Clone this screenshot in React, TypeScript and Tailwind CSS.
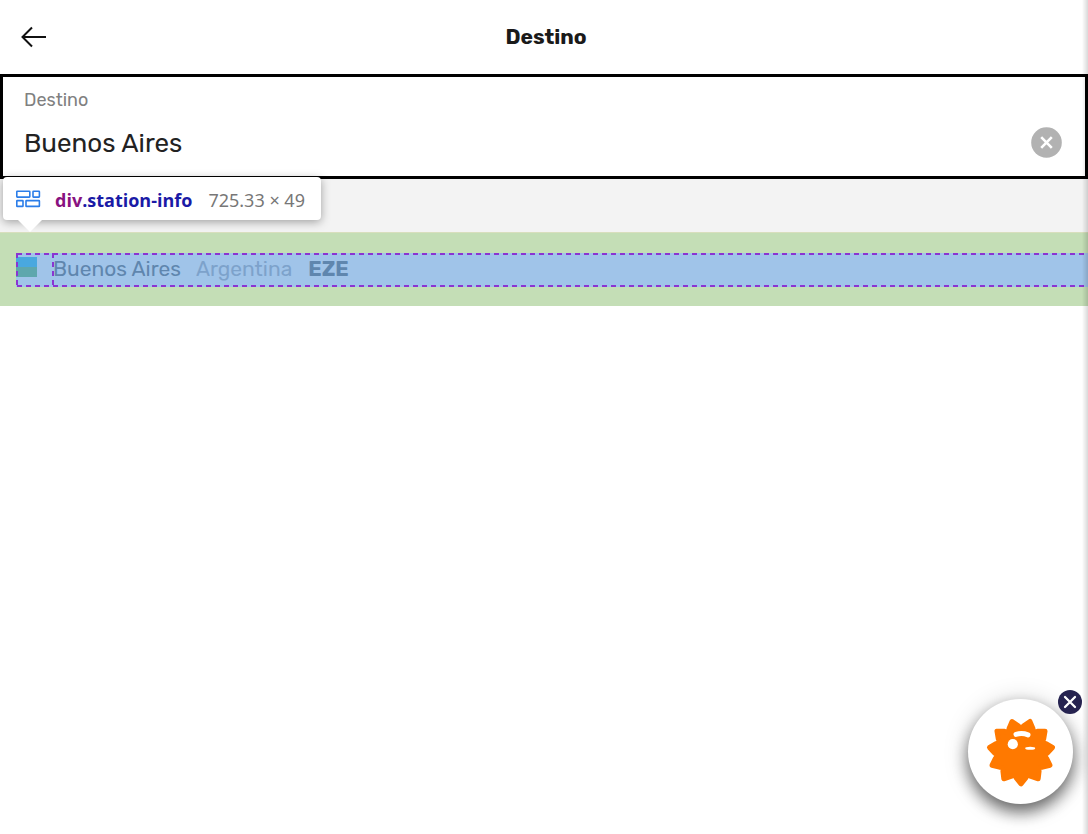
import React from "react";

const TIPS = 11;
const point = (radius: number, step: number) => {
  const angle = Math.PI / 2 + (step * 2 * Math.PI) / TIPS;
  return `${(36 + radius * Math.cos(angle)).toFixed(2)} ${(36 + radius * Math.sin(angle)).toFixed(2)}`;
};
const burst =
  `M${point(31.8, 0)}` +
  Array.from(
    { length: TIPS },
    (_, i) => `L${point(26.4, i + 0.32)}Q${point(22.8, i + 0.5)} ${point(26.4, i + 0.68)}L${point(31.8, i + 1)}`,
  ).join("") +
  "Z";

function Header() {
  return (
    <header className="relative flex h-[74px] items-center justify-center bg-white pl-1">
      <button type="button" aria-label="Volver" className="absolute left-5 flex h-8 w-8 items-center">
        <svg width="28" height="24" viewBox="0 0 28 24" fill="none" stroke="#111" strokeWidth="2">
          <path d="M26 12H2.5M12 2.5L2.5 12l9.5 9.5" />
        </svg>
      </button>
      <h1 className="text-[21px] leading-7 font-bold text-[#1a1a1a]">Destino</h1>
    </header>
  );
}

function DestinationField() {
  return (
    <div className="flex h-[105px] items-end border-[3px] border-black bg-white pr-[23px] pb-[13px] pl-[21px]">
      <div className="flex flex-1 flex-col gap-[11px]">
        <label htmlFor="destination" className="text-[18px] leading-6 text-[#808080]">
          Destino
        </label>
        <input
          id="destination"
          defaultValue="Buenos Aires"
          className="h-10 w-full bg-transparent text-[26px] text-[#222] outline-none"
        />
      </div>
      <button type="button" aria-label="Borrar" className="mb-[5px] h-[31px] w-[31px] shrink-0">
        <svg width="31" height="31" viewBox="0 0 31 31">
          <circle cx="15.5" cy="15.5" r="15.3" fill="#b2b2b2" />
          <path d="M10.2 10.2l10.6 10.6M20.8 10.2L10.2 20.8" stroke="#fff" strokeWidth="2.6" />
        </svg>
      </button>
    </div>
  );
}

function InspectorTooltip() {
  return (
    <div className="absolute top-[177px] left-[3px] z-10 flex h-[43px] w-[318px] items-center rounded-[4px] bg-white pl-3 font-['Noto_Sans','Open_Sans',sans-serif] text-[18px] shadow-[0_2px_10px_rgba(0,0,0,0.35)]">
      <svg width="26" height="20" viewBox="0 0 26 20" fill="none" stroke="#2b7de9" strokeWidth="1.6" className="shrink-0">
        <rect x="1.8" y="2.3" width="13" height="5.8" rx=".5" />
        <rect x="18" y="2.3" width="6.4" height="5.8" rx=".5" />
        <rect x="1.8" y="11.6" width="6.2" height="5.8" rx=".5" />
        <rect x="11" y="11.6" width="13.4" height="5.8" rx=".5" />
      </svg>
      <div className="flex items-baseline pt-[3px] pl-[14px] whitespace-nowrap">
        <span className="font-['Open_Sans','Noto_Sans',sans-serif] text-[18px] font-bold text-[#1a1aa6]">
          <span className="text-[#881280]">div</span>.station-info
        </span>
        <span className="ml-4 text-[#777]">725.33 × 49</span>
      </div>
      <svg width="24" height="12" viewBox="0 0 24 12" className="absolute top-full left-[15px]">
        <path d="M0 0h24L12 12z" fill="#fff" />
      </svg>
    </div>
  );
}

const horizontalDash = "absolute right-0 left-px h-[2px] bg-[repeating-linear-gradient(90deg,#8a35d2_0_5px,transparent_5px_9px)]";
const verticalDash = "absolute top-0 bottom-0 w-[2px] bg-[repeating-linear-gradient(180deg,#8a35d2_0_5px,transparent_5px_9px)]";

function StationResult() {
  return (
    <ul>
      <li className="h-[74px] border-t border-[#d8dfbd] bg-[#c4deb6] pt-5 pl-4">
        <a href="#eze" className="relative flex h-[34px] bg-[#a0c4e9] text-[21px] leading-8 text-[#5f86ae]">
          <span className="mt-1 mr-4 h-5 w-[21px] bg-[linear-gradient(#49a8df_0_50%,#5ea7ad_50%)]" />
          <span>Buenos Aires</span>
          <span className="ml-[15px] text-[#7da2cb]">Argentina</span>
          <strong className="ml-4 font-bold">EZE</strong>
          <span className={`${horizontalDash} top-0`} />
          <span className={`${horizontalDash} bottom-0`} />
          <span className={`${verticalDash} left-0`} />
          <span className={`${verticalDash} left-9`} />
        </a>
      </li>
    </ul>
  );
}

function ChatWidget() {
  return (
    <div className="fixed right-[15px] bottom-[30px]">
      <button
        type="button"
        aria-label="Asistente"
        className="flex h-[105px] w-[105px] items-center justify-center rounded-full bg-white shadow-[0_8px_16px_rgba(0,0,0,0.55),0_2px_26px_rgba(0,0,0,0.18)]"
      >
        <svg width="72" height="72" viewBox="0 0 72 72">
          <path d={burst} fill="#ff7900" stroke="#ff7900" strokeWidth="5" strokeLinejoin="round" />
          <path d="M31 18.4q6-1.8 12 .4" fill="none" stroke="#fff" strokeWidth="5" strokeLinecap="round" />
          <circle cx="27.8" cy="28.2" r="5.1" fill="#fff" />
          <ellipse cx="45.2" cy="32.2" rx="5" ry="1.5" fill="#fff" />
        </svg>
      </button>
      <button
        type="button"
        aria-label="Cerrar asistente"
        className="absolute -top-[9px] -right-[9px] h-6 w-6 rounded-full bg-[#262350]"
      >
        <svg width="24" height="24" viewBox="0 0 24 24" stroke="#fff" strokeWidth="2.3" strokeLinecap="round">
          <path d="M7 7l10 10M17 7L7 17" />
        </svg>
      </button>
    </div>
  );
}

export default function App() {
  return (
    <div className="relative min-h-screen overflow-hidden bg-white font-['Rubik','Roboto',sans-serif]">
      <Header />
      <main>
        <DestinationField />
        <div className="h-[53px] bg-[#f3f3f3]" />
        <StationResult />
      </main>
      <InspectorTooltip />
      <ChatWidget />
      <div className="pointer-events-none absolute top-0 right-0 bottom-0 w-[6px] bg-linear-to-r from-transparent to-black/15" />
    </div>
  );
}
